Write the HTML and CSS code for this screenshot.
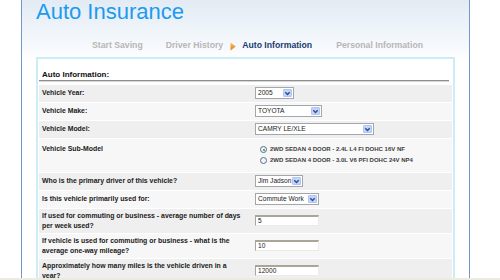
FILE: index.html
```html
<!DOCTYPE html>
<html lang="en">
<head>
    <meta charset="UTF-8">
    <title>Auto Insurance - Auto Information</title>
    <link rel="stylesheet" href="styles.css">
</head>
<body>
    <div class="page">
        <h1 class="title">Auto Insurance</h1>

        <div class="steps">
            <span class="step step-first">Start Saving</span>
            <span class="step step-done">Driver History</span>
            <svg class="step-arrow" width="6" height="9" viewBox="0 0 6 9">
                <defs>
                    <linearGradient id="arrowFill" x1="0" y1="0" x2="0" y2="1">
                        <stop offset="0" stop-color="#fcc064"/>
                        <stop offset="1" stop-color="#e87a14"/>
                    </linearGradient>
                </defs>
                <path d="M0.5 0.5 L5.8 4.5 L0.5 8.5 Z" fill="url(#arrowFill)"/>
            </svg>
            <span class="step step-active">Auto Information</span>
            <span class="step">Personal Information</span>
        </div>

        <div class="form-box">
            <h2 class="form-heading">Auto Information:</h2>
            <table class="form-table">
                <tr>
                    <td class="label">Vehicle Year:</td>
                    <td class="value">
                        <span class="select select-year"><span class="select-text">2005</span><span class="select-btn"><svg width="7" height="7" viewBox="0 0 7 7"><path d="M1.3 2.2 L3.5 4.5 L5.7 2.2" /></svg></span></span>
                    </td>
                </tr>
                <tr>
                    <td class="label">Vehicle Make:</td>
                    <td class="value">
                        <span class="select select-make"><span class="select-text">TOYOTA</span><span class="select-btn"><svg width="7" height="7" viewBox="0 0 7 7"><path d="M1.3 2.2 L3.5 4.5 L5.7 2.2" /></svg></span></span>
                    </td>
                </tr>
                <tr>
                    <td class="label">Vehicle Model:</td>
                    <td class="value">
                        <span class="select select-model"><span class="select-text">CAMRY LE/XLE</span><span class="select-btn"><svg width="7" height="7" viewBox="0 0 7 7"><path d="M1.3 2.2 L3.5 4.5 L5.7 2.2" /></svg></span></span>
                    </td>
                </tr>
                <tr>
                    <td class="label label-top">Vehicle Sub-Model</td>
                    <td class="value">
                        <div class="radio-list">
                            <label class="radio-line"><span class="radio radio-checked"></span>2WD SEDAN 4 DOOR - 2.4L L4 FI DOHC 16V NF</label>
                            <label class="radio-line"><span class="radio"></span>2WD SEDAN 4 DOOR - 3.0L V6 PFI DOHC 24V NP4</label>
                        </div>
                    </td>
                </tr>
                <tr>
                    <td class="label">Who is the primary driver of this vehicle?</td>
                    <td class="value">
                        <span class="select select-driver"><span class="select-text">Jim Jadson</span><span class="select-btn"><svg width="7" height="7" viewBox="0 0 7 7"><path d="M1.3 2.2 L3.5 4.5 L5.7 2.2" /></svg></span></span>
                    </td>
                </tr>
                <tr>
                    <td class="label">Is this vehicle primarily used for:</td>
                    <td class="value">
                        <span class="select select-use"><span class="select-text">Commute Work</span><span class="select-btn"><svg width="7" height="7" viewBox="0 0 7 7"><path d="M1.3 2.2 L3.5 4.5 L5.7 2.2" /></svg></span></span>
                    </td>
                </tr>
                <tr class="row-tall">
                    <td class="label">If used for commuting or business - average number of days per week used?</td>
                    <td class="value"><span class="text-input">5</span></td>
                </tr>
                <tr class="row-tall">
                    <td class="label">If vehicle is used for commuting or business - what is the average one-way mileage?</td>
                    <td class="value"><span class="text-input">10</span></td>
                </tr>
                <tr class="row-tall">
                    <td class="label">Approximately how many miles is the vehicle driven in a year?</td>
                    <td class="value"><span class="text-input">12000</span></td>
                </tr>
            </table>
        </div>
    </div>
    <div class="status-strip"></div>
</body>
</html>
```

FILE: styles.css
```css
body {
    margin: 0;
    background: #fff;
    font-family: "Liberation Sans", Arial, sans-serif;
    color: #1f1f1f;
}
.page {
    margin-left: 21px;
    width: 419px;
    padding: 0 14px 20px 14px;
    border-left: 1px solid #7595cc;
    border-right: 1px solid #7595cc;
    background: linear-gradient(#e2ebf4 0, #f3f7fb 40px, #fff 62px);
}
.title {
    margin: 0;
    padding-top: 1px;
    font-size: 22px;
    line-height: 22px;
    font-weight: normal;
    color: #1b9bf0;
}
.steps {
    display: flex;
    align-items: center;
    margin-top: 17px;
    padding-left: 56px;
    height: 10px;
    font-size: 8.7px;
    line-height: 10px;
    font-weight: bold;
    color: #b6b6b6;
}
.step-first {
    margin-right: 23px;
}
.step-done {
    margin-right: 7px;
}
.step-arrow {
    margin: 3px 6px 0 0;
}
.step-active {
    color: #163b72;
    margin-right: 24px;
}
.form-box {
    margin-top: 7px;
    padding: 0 1px 10px 1px;
    border: 2px solid #ccedf6;
    border-bottom: none;
    background: #fff;
}
.form-heading {
    margin: 0 3px 0 0;
    padding: 11px 0 0 3px;
    font-size: 8px;
    line-height: 10px;
    color: #111;
    border-bottom: 1px solid #8e8e8e;
    box-shadow: 0 1px 0 #d6d6d6;
}
.form-table {
    width: 100%;
    margin-top: 2.5px;
    border-collapse: separate;
    border-spacing: 0 1.5px;
}
.form-table tr:nth-child(odd) td {
    background: #efefef;
}
.form-table tr:nth-child(even) td {
    background: #f7f7f7;
}
.form-table td {
    height: 13px;
    padding: 2px 3px;
    font-size: 6.9px;
    line-height: 9.5px;
    vertical-align: middle;
}
.form-table .row-tall td {
    padding-top: 2.5px;
    padding-bottom: 2.5px;
}
.label {
    width: 203px;
    padding-right: 7px !important;
    font-weight: bold;
    color: #202020;
}
.label-top {
    vertical-align: top !important;
    padding-top: 5px !important;
}
.value {
    line-height: 0 !important;
}
.select {
    display: inline-flex;
    align-items: center;
    justify-content: space-between;
    box-sizing: border-box;
    height: 12px;
    padding: 0 1px 0 2px;
    border: 1px solid #a3a7ab;
    background: #fff;
    font-size: 6.6px;
    line-height: 10px;
    color: #1a1a1a;
    vertical-align: middle;
}
.select-year { width: 39px; }
.select-make { width: 67px; }
.select-model { width: 119px; }
.select-driver { width: 48px; }
.select-use { width: 64px; }
.select-btn {
    display: flex;
    align-items: center;
    justify-content: center;
    width: 9px;
    height: 8px;
    background: #c4d4f6;
    border: 1px solid #b3c6ef;
    box-sizing: border-box;
    border-radius: 1px;
}
.select-btn path {
    fill: none;
    stroke: #2c4b98;
    stroke-width: 1.4;
}
.text-input {
    display: inline-block;
    box-sizing: border-box;
    width: 64px;
    height: 11px;
    padding-left: 2px;
    border-top: 2px solid #a9a598;
    border-left: 1px solid #a9a598;
    border-right: 1px solid #ecebe6;
    border-bottom: 1px solid #ecebe6;
    background: #fff;
    font-size: 6.6px;
    line-height: 8px;
    color: #1a1a1a;
    vertical-align: middle;
}
.radio-list {
    padding: 3.5px 0;
}
.radio-line {
    display: flex;
    align-items: center;
    height: 11px;
    padding-left: 5px;
    font-size: 6px;
    line-height: 11px;
    font-weight: bold;
    color: #3d3d3d;
}
.radio {
    position: relative;
    box-sizing: border-box;
    width: 7px;
    height: 7px;
    margin-right: 3px;
    border: 1px solid #4f6f98;
    border-radius: 50%;
    background: #f4f4f0;
}
.radio-checked::after {
    content: "";
    position: absolute;
    left: 1.5px;
    top: 1.5px;
    width: 2px;
    height: 2px;
    border-radius: 50%;
    background: #2aa12a;
}
.status-strip {
    position: fixed;
    left: 0;
    right: 0;
    bottom: 0;
    height: 2px;
    background: #ecebe2;
}
```
